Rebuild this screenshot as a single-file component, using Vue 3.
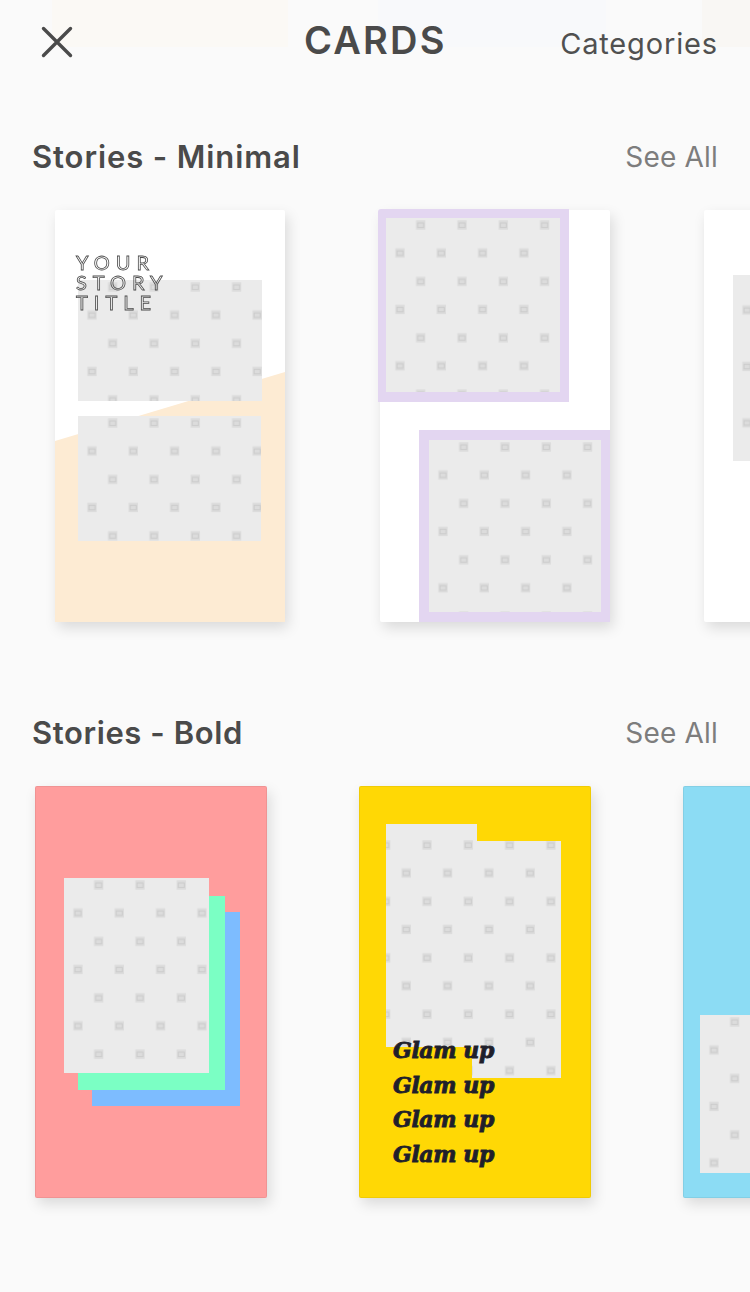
<template>
  <div class="screen">
    <header class="topbar">
      <div class="ghosts">
        <span class="ghost ghost-a"></span>
        <span class="ghost ghost-b"></span>
        <span class="ghost ghost-c"></span>
      </div>
      <svg class="close" width="32" height="32" viewBox="0 0 32 32">
        <path d="M2.5 2.5 L29.5 29.5 M29.5 2.5 L2.5 29.5" />
      </svg>
      <h1 class="title">CARDS</h1>
      <a class="categories">Categories</a>
    </header>

    <section v-for="section in sections" :key="section.name" class="section" :class="section.cls">
      <div class="section-head">
        <h2>{{ section.name }}</h2>
        <a>See All</a>
      </div>
      <div class="row">
        <div v-for="card in section.cards" :key="card.cls" class="card" :class="card.cls">
          <div v-for="deco in card.decos" :key="deco" class="deco" :class="deco"></div>
          <svg v-for="photo in card.photos" :key="photo" class="photo" :class="photo">
            <defs>
              <pattern
                :id="photo"
                width="41.3"
                height="56.4"
                patternUnits="userSpaceOnUse"
                :patternTransform="shifts[photo]"
              >
                <g v-for="m in markers" :key="m.x">
                  <rect :x="m.x - 4.7" :y="m.y - 4.7" width="9.4" height="9.4" fill="#dcdcdc" />
                  <rect :x="m.x - 3" :y="m.y - 2" width="6" height="4.4" fill="none" stroke="#cccccc" />
                </g>
              </pattern>
            </defs>
            <rect width="100%" height="100%" :fill="`url(#${photo})`" />
          </svg>
          <div v-if="card.cls === 'c-peach'" class="story-title">YOUR<br />STORY<br />TITLE</div>
          <div v-if="card.cls === 'c-yellow'" class="glam">
            <span v-for="n in 4" :key="n">Glam up</span>
          </div>
        </div>
      </div>
    </section>
  </div>
</template>

<script setup>
const markers = [
  { x: 34.7, y: 7 },
  { x: 14, y: 35 },
]

// the yellow card's placeholder sits on a different grid
const shifts = { p7: 'translate(6.3 14)' }

const sections = [
  {
    name: 'Stories - Minimal',
    cls: 's-minimal',
    cards: [
      { cls: 'c-peach', decos: ['peach-shape'], photos: ['p1', 'p2'] },
      { cls: 'c-lilac', decos: ['frame-a', 'frame-b'], photos: ['p3', 'p4'] },
      { cls: 'c-white', decos: [], photos: ['p5'] },
    ],
  },
  {
    name: 'Stories - Bold',
    cls: 's-bold',
    cards: [
      { cls: 'c-pink', decos: ['sheet-blue', 'sheet-green'], photos: ['p6'] },
      { cls: 'c-yellow', decos: [], photos: ['p7'] },
      { cls: 'c-sky', decos: [], photos: ['p8'] },
    ],
  },
]
</script>

<style>
html, body { background: #fafafa; }
</style>

<style scoped>
.screen {
  width: 750px;
  height: 1292px;
  overflow: hidden;
  background: #fafafa;
  font-family: Inter, "Open Sans", sans-serif;
  color: #4a4a4a;
}

.topbar {
  position: relative;
  height: 80px;
  display: flex;
  align-items: center;
  justify-content: space-between;
  padding: 0 32px 0 41px;
}
.ghosts { position: absolute; left: 0; top: 0; width: 100%; height: 47px; }
.ghost { position: absolute; top: 0; height: 47px; }
.ghost-a { left: 52px; width: 236px; background: #fbf9f5; }
.ghost-b { left: 378px; width: 228px; background: #f8f9fb; }
.ghost-c { left: 702px; width: 48px; background: #f9f7f4; }
.close { position: relative; margin-top: 3px; }
.close path { fill: none; stroke: #4a4a4a; stroke-width: 3.4; stroke-linecap: round; }
.title {
  position: absolute;
  left: 304px;
  top: 16px;
  margin: 0;
  font-size: 38px;
  font-weight: 600;
  line-height: 48px;
  letter-spacing: 2.2px;
}
.categories { position: relative; font-size: 29px; margin-top: 7px; letter-spacing: 0.85px; color: #505050; }

.section-head {
  display: flex;
  align-items: center;
  justify-content: space-between;
  padding: 0 32px;
  height: 40px;
}
.section-head h2 { margin: -2px 0 0; font-size: 31px; font-weight: 600; letter-spacing: 0.9px; }
.s-bold .section-head h2 { letter-spacing: 0.6px; }
.section-head a { font-size: 28px; color: #7d7d7d; letter-spacing: 0.2px; }
.s-minimal { margin-top: 57px; }
.s-bold { margin-top: 91px; }

.row { display: flex; margin-top: 33px; }
.s-minimal .row { padding-left: 55px; gap: 94.5px; }
.s-bold .row { padding-left: 35px; gap: 92px; }

.card {
  position: relative;
  flex: none;
  height: 412px;
  background: #fff;
  border-radius: 2px;
  box-shadow: 3px 6px 14px rgba(0, 0, 0, 0.13);
}
.s-minimal .card { width: 230px; }
.s-bold .card { width: 232px; }
.c-pink { background: #ff9d9d; }
.c-yellow { background: #ffd805; }
.c-sky { background: #8cdcf4; }
.s-bold .card::after {
  content: "";
  position: absolute;
  inset: 0;
  border-radius: 2px;
  box-shadow: inset 0 0 0 1px rgba(0, 0, 0, 0.06);
}

.deco { position: absolute; }
.peach-shape {
  inset: 0;
  background: #fdebd3;
  clip-path: polygon(0 231px, 100% 162px, 100% 100%, 0 100%);
}
.frame-a { left: -1.5px; top: -1px; width: 191px; height: 193px; background: #e3d6f1; border-top-left-radius: 3px; }
.frame-b { left: 39.5px; top: 220px; width: 190.5px; height: 192px; background: #e3d6f1; }
.sheet-blue { left: 57px; top: 126px; width: 148px; height: 194px; background: #7dbcff; }
.sheet-green { left: 43px; top: 110px; width: 147px; height: 194px; background: #7bffc4; }

.photo { position: absolute; display: block; background: #ebebeb; filter: blur(0.35px); }
.p1 { left: 23px; top: 70px; width: 184px; height: 121px; }
.p2 { left: 23px; top: 206px; width: 183px; height: 125px; }
.p3 { left: 6.5px; top: 8px; width: 174px; height: 174px; }
.p4 { left: 49.5px; top: 230px; width: 172px; height: 172px; }
.p5 { left: 29px; top: 65px; width: 202px; height: 186px; }
.p6 { left: 29px; top: 92px; width: 145px; height: 195px; }
.p7 {
  left: 27px;
  top: 38px;
  width: 175px;
  height: 254px;
  clip-path: polygon(0 0, 91px 0, 91px 17px, 175px 17px, 175px 254px, 86px 254px, 86px 223px, 0 223px);
}
.p8 { left: 17px; top: 229px; width: 214px; height: 158px; }

.story-title {
  position: absolute;
  left: 21px;
  top: 42px;
  font-family: Lato, sans-serif;
  font-size: 20px;
  line-height: 20px;
  letter-spacing: 6px;
  color: transparent;
  -webkit-text-stroke: 0.8px #4a4a4a;
  will-change: transform;
}
.glam {
  position: absolute;
  left: 34px;
  top: 247px;
  display: flex;
  flex-direction: column;
  font-family: "DejaVu Serif", serif;
  font-weight: 700;
  font-style: italic;
  font-size: 22px;
  line-height: 34.5px;
  letter-spacing: -0.4px;
  color: #1f1f2b;
  -webkit-text-stroke: 0.9px #1f1f2b;
}
</style>
